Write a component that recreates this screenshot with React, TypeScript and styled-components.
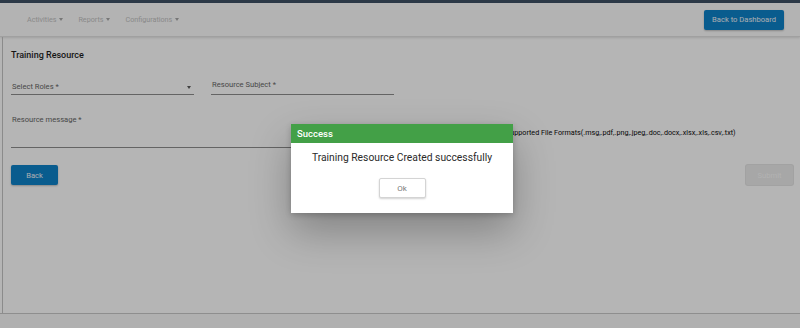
import styled, { createGlobalStyle } from 'styled-components'

const GlobalStyle = createGlobalStyle`
  html, body {
    margin: 0;
    padding: 0;
    background: #ffffff;
    font-family: Roboto, 'Liberation Sans', sans-serif;
  }
  * { box-sizing: border-box; }
`

const Page = styled.div`
  width: 800px;
  height: 328px;
  display: flex;
  flex-direction: column;
  overflow: hidden;
  position: relative;
`

const TopStripe = styled.div`
  height: 3px;
  background: #3e5165;
`

const NavBar = styled.div`
  height: 34px;
  display: flex;
  align-items: center;
  justify-content: space-between;
  padding: 0 16px 0 27px;
  background: #fdfdfd;
  border-bottom: 1px solid #e2e2e2;
  box-shadow: 0 1px 2px rgba(0, 0, 0, 0.12);
`

const NavMenu = styled.div`
  display: flex;
  gap: 15px;
`

const NavItem = styled.span`
  font-size: 7.2px;
  color: #c2c2c2;
  display: flex;
  align-items: center;
  gap: 3px;
`

const Caret = styled.span<{ $color?: string }>`
  width: 0;
  height: 0;
  border-left: 2.5px solid transparent;
  border-right: 2.5px solid transparent;
  border-top: 3px solid ${({ $color }) => $color ?? '#a8a8a8'};
`

const Button = styled.button<{ $disabled?: boolean }>`
  font-family: inherit;
  font-size: 7.6px;
  border: none;
  border-radius: 2px;
  padding: 0 8px;
  height: 20px;
  color: ${({ $disabled }) => ($disabled ? '#fbfbfb' : '#eef4f9')};
  background: ${({ $disabled }) => ($disabled ? '#ebebeb' : '#0e82c9')};
  box-shadow: ${({ $disabled }) => ($disabled ? '0 0 0 1px #e4e4e4' : '0 1px 2px rgba(0,0,0,0.25)')};
`

const Card = styled.div`
  flex: 1;
  margin-left: 2px;
  border-left: 1px solid #c4c4c4;
  padding: 12px 7px 0 8px;
  display: flex;
  flex-direction: column;
`

const Title = styled.div`
  font-size: 9px;
  font-weight: 500;
  color: #1e1e1e;
  line-height: 12px;
`

const FieldRow = styled.div`
  display: flex;
  align-items: flex-end;
  gap: 17px;
  margin-top: 15px;
`

const Field = styled.div<{ $width: number; $height?: number }>`
  width: ${({ $width }) => $width}px;
  height: ${({ $height }) => $height ?? 19}px;
  border-bottom: 1px solid #8e8e8e;
  display: flex;
  align-items: flex-start;
  justify-content: space-between;
  padding: 0 3px 0 1px;
`

const Label = styled.span`
  font-size: 7.6px;
  color: #666666;
  line-height: 10px;
`

const MessageRow = styled.div`
  display: flex;
  align-items: flex-start;
  gap: 14px;
  margin-top: 19px;
`

const FileInput = styled.span`
  width: 77px;
  font-size: 7px;
  color: #222;
  margin-top: 15px;
`

const Formats = styled.span`
  font-size: 7.2px;
  color: #0a0a0a;
  margin-top: 14px;
  white-space: nowrap;
`

const ActionRow = styled.div`
  display: flex;
  justify-content: space-between;
  margin-top: 17px;
`

const Footer = styled.div`
  height: 15px;
  border-top: 1px solid #c9c9c9;
  background: #f8f8f8;
`

const Overlay = styled.div`
  position: absolute;
  inset: 0;
  background: rgba(0, 0, 0, 0.29);
`

const Modal = styled.div`
  position: absolute;
  left: 291px;
  top: 124px;
  width: 222px;
  background: #fff;
  box-shadow: 0 18px 40px rgba(0, 0, 0, 0.28), 0 2px 6px rgba(0, 0, 0, 0.2);
`

const ModalHeader = styled.div`
  height: 19px;
  background: #43a047;
  color: #fff;
  font-size: 9.5px;
  font-weight: 500;
  display: flex;
  align-items: center;
  padding-left: 6px;
`

const ModalBody = styled.div`
  display: flex;
  flex-direction: column;
  align-items: center;
  padding: 8px 0 15px;
`

const Message = styled.div`
  font-size: 10.3px;
  color: #2a2a2a;
  line-height: 14px;
`

const OkButton = styled.button`
  margin-top: 13px;
  width: 47px;
  height: 20px;
  background: #fff;
  border: 1px solid #d4d4d4;
  border-radius: 2px;
  box-shadow: 0 1px 2px rgba(0, 0, 0, 0.18);
  font-family: inherit;
  font-size: 8px;
  color: #7a7a7a;
`

export default function App() {
  return (
    <>
      <GlobalStyle />
      <Page>
        <TopStripe />
        <NavBar>
          <NavMenu>
            <NavItem>Activities <Caret /></NavItem>
            <NavItem>Reports <Caret /></NavItem>
            <NavItem>Configurations <Caret /></NavItem>
          </NavMenu>
          <Button>Back to Dashboard</Button>
        </NavBar>
        <Card>
          <Title>Training Resource</Title>
          <FieldRow>
            <Field $width={183}>
              <Label style={{ marginTop: 6 }}>Select Roles *</Label>
              <Caret $color="#5c5c5c" style={{ marginTop: 10 }} />
            </Field>
            <Field $width={183}>
              <Label style={{ marginTop: 4 }}>Resource Subject *</Label>
            </Field>
          </FieldRow>
          <MessageRow>
            <Field $width={390} $height={34}>
              <Label style={{ marginTop: 1 }}>Resource message *</Label>
            </Field>
            <FileInput>Choose File</FileInput>
            <Formats>Supported File Formats(.msg,.pdf,.png,.jpeg,.doc,.docx,.xlsx,.xls,.csv,.txt)</Formats>
          </MessageRow>
          <ActionRow>
            <Button style={{ width: 47 }}>Back</Button>
            <Button $disabled style={{ width: 47 }}>Submit</Button>
          </ActionRow>
        </Card>
        <Footer />
        <Overlay />
        <Modal>
          <ModalHeader>Success</ModalHeader>
          <ModalBody>
            <Message>Training Resource Created successfully</Message>
            <OkButton>Ok</OkButton>
          </ModalBody>
        </Modal>
      </Page>
    </>
  )
}
